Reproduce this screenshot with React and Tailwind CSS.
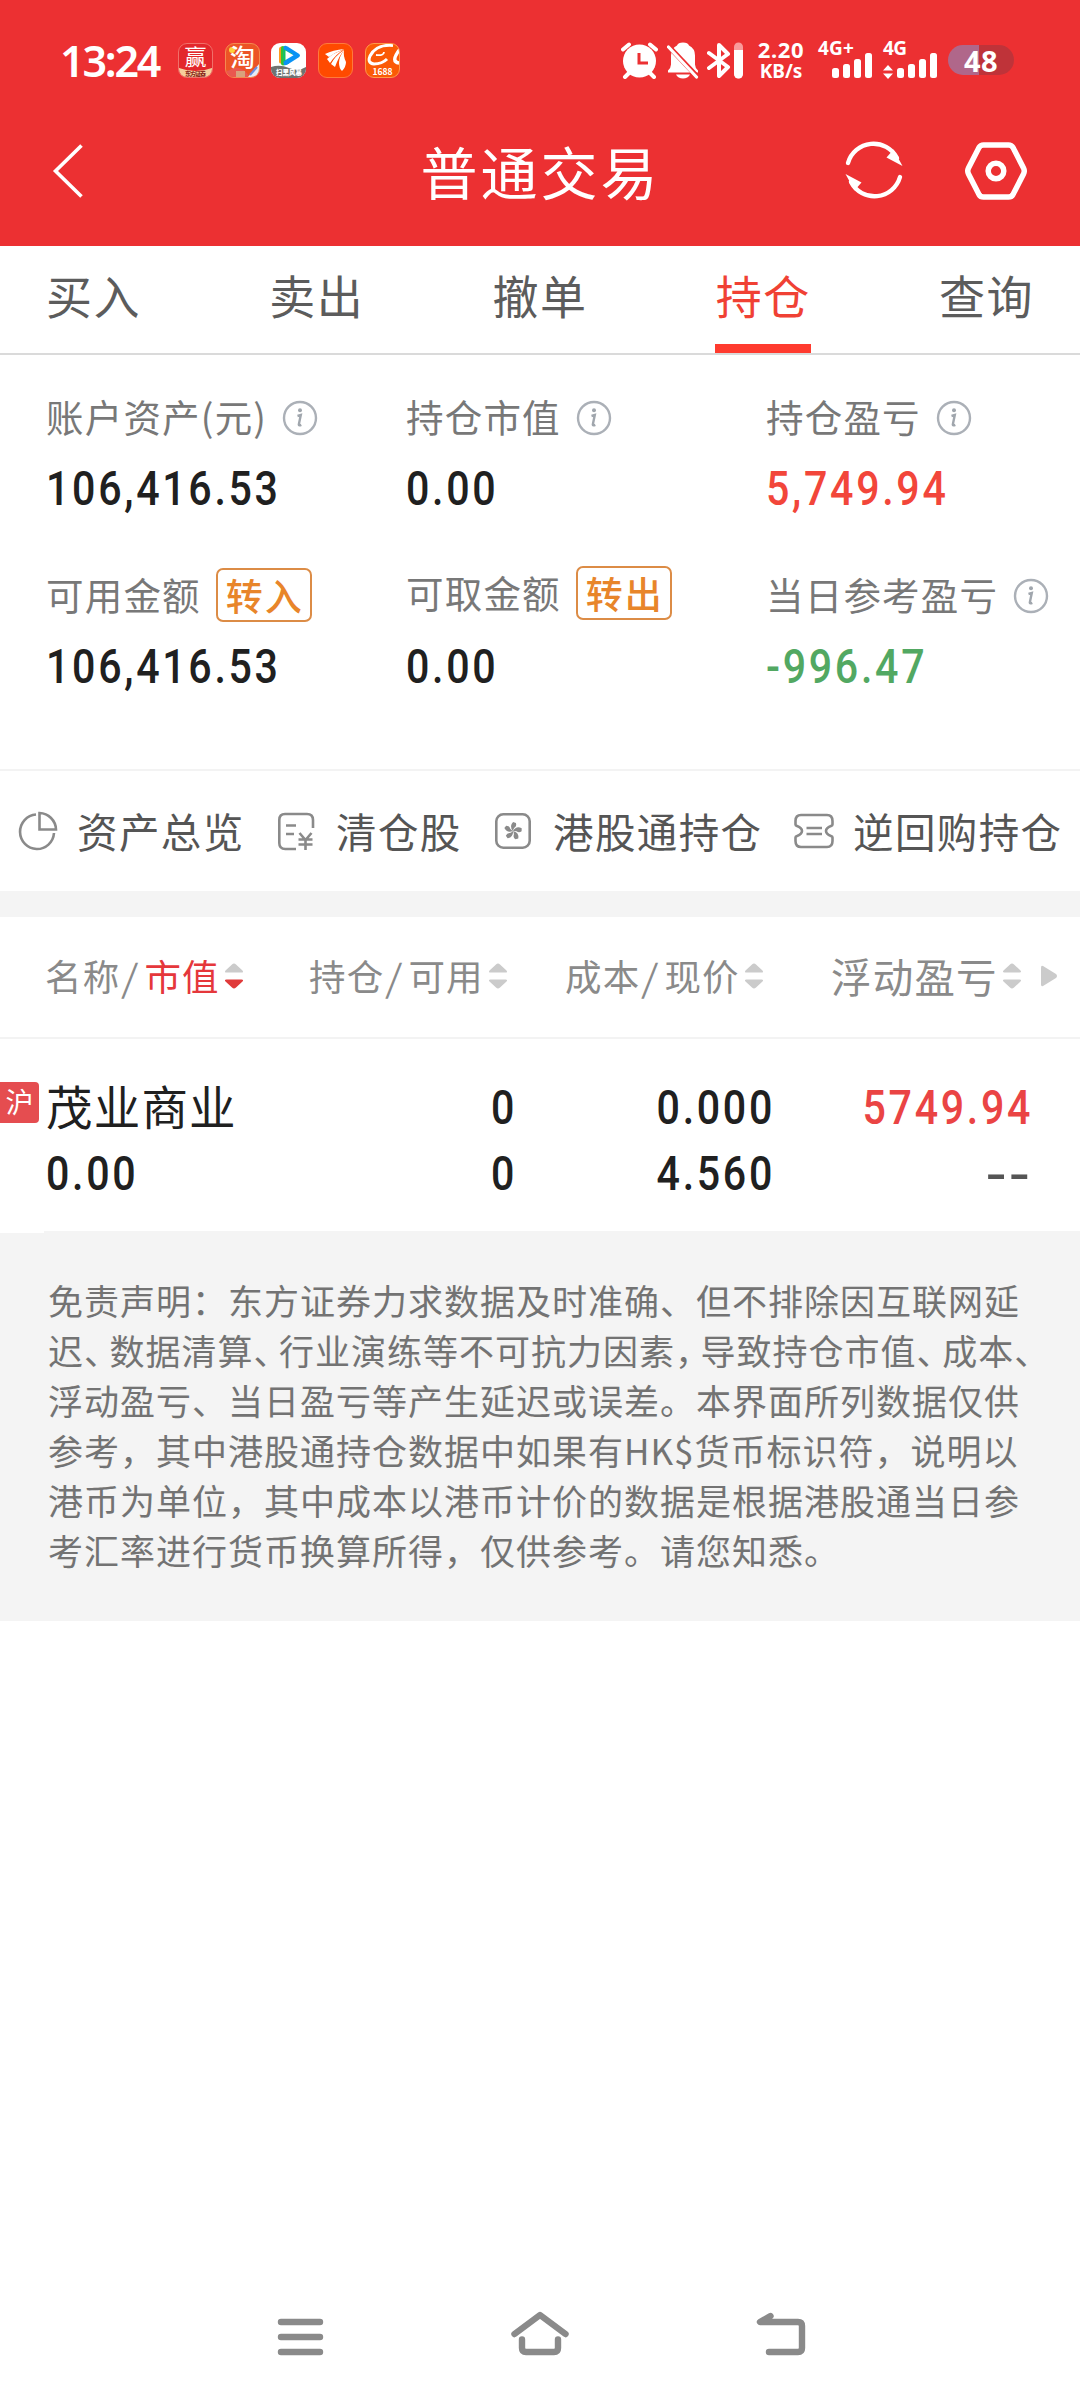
const CJK = "font-['Noto_Sans_CJK_SC',sans-serif]";

function AppBadge({ children, className }) {
  return (
    <div className={`h-[35px] w-[35px] overflow-hidden rounded-[9px] ${className}`}>
      {children}
    </div>
  );
}

function Signal({ className }) {
  return (
    <svg width="40" height="26" viewBox="0 0 40 26" fill="#fff" className={className}>
      <rect x="0" y="15" width="7" height="10" rx="2.5" />
      <rect x="11" y="11" width="7" height="14" rx="2.5" />
      <rect x="22" y="6" width="7" height="19" rx="2.5" />
      <rect x="33" y="0" width="7" height="25" rx="2.5" />
    </svg>
  );
}

function StatusBar() {
  return (
    <div className="flex h-[100px] items-center pt-5 pl-[60px]">
      <div className="w-[118px] font-['Noto_Sans',sans-serif] text-[43px] leading-none font-semibold tracking-[-2.2px]">
        13:24
      </div>
      <div className="flex w-[443px] gap-[11.7px]">
        <AppBadge className="border border-[#f0706a] bg-[#e3262b]">
          <svg width="33" height="33" viewBox="0 0 33 33">
            <path d="M0 24q8 3 16.500 3T33 24v9H0z" fill="#f6cf9c" />
            <text x="5.500" y="20.500" fontSize="22" fill="#fff">赢</text>
            <text x="6" y="32" fontSize="6" fontWeight="900" fill="#8a2a1c" textLength="21">东方证券</text>
          </svg>
        </AppBadge>
        <AppBadge className="flex items-center justify-center border border-[#f58a50] bg-[#ec5426]">
          <svg width="33" height="33" viewBox="0 0 33 33">
            <path d="M0 33V27c5 0 6-4 12-3s8 4 12 9z" fill="#e9584f" />
            <path d="M22 33L33 20v13z" fill="#e6eaf5" />
            <path d="M10 27h9v6h-9z" fill="#d9a27c" />
            <circle cx="6" cy="6" r="3" fill="#ffd23c" />
            <text x="4" y="22.500" fontSize="25" fontWeight="500" fill="#fff">淘</text>
            <path d="M24 31l7-8" stroke="#6a8fe0" strokeWidth="2" />
          </svg>
        </AppBadge>
        <AppBadge className="bg-white">
          <svg width="35" height="35" viewBox="0 0 35 35">
            <path d="M0 24q9-3 18 1t17-1v11H0z" fill="#6f7371" />
            <path d="M8 6q0-2.500 3-2.500l2 17q-5 1-5-2z" fill="#ff9a1f" />
            <path d="M10 5q0-3 4-1.500l4 17q-8 4-8 0z" fill="#32c432" />
            <path d="M12.500 4q1-2 4-.5l11 7q3 2 0 4l-11 7q-4 2-4-1z" fill="#0a93f5" />
            <path d="M12.500 6l9 5-9 8z" fill="#19c556" />
            <path d="M14.500 7.500v9.500l8-4.700z" fill="#fff" />
            <text x="5" y="31.500" fontSize="6.500" fontWeight="900" fill="#fff" textLength="26">扫黑风暴</text>
          </svg>
        </AppBadge>
        <AppBadge className="border border-[#ff7a3c] bg-[#ff4a00]">
          <svg width="33" height="33" viewBox="0 0 33 33" fill="#fff">
            <path d="M25 5Q14 6 6 10l4 3Q17 8 25 5z" />
            <path d="M25 5.500Q14 9 8 15l3 4Q17 10 25 5.500z" />
            <path d="M25 6Q16 12 12 20l4 3Q20 12 25 6z" />
            <path d="M25 6q-5 7-5 13 0 5 3 8 4-4 4-9-3-6-2-12z" />
          </svg>
        </AppBadge>
        <AppBadge className="border border-[#ff9a4a] bg-[#fb5a06]">
          <svg width="33" height="33" viewBox="0 0 33 33" fill="none" stroke="#fff">
            <path d="M27 1.500Q10 0 4 12q-3 7 4 8 8 0 13-5" strokeWidth="3" />
            <path d="M10 11q8 1 8-3" strokeWidth="1.800" />
            <path d="M34 5q-10 13-1 14" strokeWidth="3.400" />
            <text x="16.500" y="30.500" textAnchor="middle" fontSize="8.500" fontWeight="700" fill="#fff" stroke="none">1688</text>
          </svg>
        </AppBadge>
      </div>
      <svg width="37" height="37" viewBox="0 0 37 37" fill="none" stroke="#fff" strokeLinecap="round">
        <path d="M2 7.500l6-5M29 2.500l6 5M9 30l-5 5M28 30l5 5" strokeWidth="4" />
        <circle cx="18.500" cy="19" r="16.500" fill="#fff" stroke="none" />
        <path d="M18 11v10h9" stroke="#ec3032" strokeWidth="3" strokeLinecap="butt" />
      </svg>
      <svg width="32" height="37" viewBox="0 0 32 37" fill="#fff" className="ml-[9px]">
        <path d="M16 .5q5 0 6 3 6 3 6 10v9q0 3 3 6v2H1v-2q3-3 3-6v-9q0-7 6-10 1-3 6-3z" />
        <path d="M9 32.500h14q-2 4-7 4t-7-4z" />
        <path d="M-1 1.500L32 36.500" stroke="#ec3032" strokeWidth="5" />
        <path d="M1.500 5L29.500 35" stroke="#fff" strokeWidth="3.200" strokeLinecap="round" />
      </svg>
      <svg width="37" height="37" viewBox="0 0 37 37" fill="none" className="ml-[8px]">
        <path d="M2 11l19 14-9 9V3l9 9L2 26" stroke="#fff" strokeWidth="4" strokeLinejoin="round" strokeLinecap="round" />
        <rect x="27" y=".5" width="9" height="36" rx="4.500" fill="#f99a9b" />
        <path d="M27 8h9v24a4.500 4.500 0 0 1-9 0z" fill="#fff" />
      </svg>
      <div className="ml-[12px] flex w-[50px] flex-col items-center font-['Noto_Sans',sans-serif] text-[22px] leading-[21px] font-bold tracking-[0.6px]">
        <span>2.20</span>
        <span className="text-[19px] leading-[22px] tracking-normal">KB/s</span>
      </div>
      <div className="ml-[12px] flex h-[37px] w-[56px] flex-col">
        <span className="font-['Noto_Sans',sans-serif] text-[19px] leading-[13px] font-bold tracking-[0.2px]">4G+</span>
        <Signal className="-mt-[2px] ml-[14px] shrink-0" />
      </div>
      <div className="ml-[9px] flex h-[37px] w-[56px] flex-col">
        <span className="font-['Noto_Sans',sans-serif] text-[19px] leading-[13px] font-bold tracking-[-0.5px]">4G</span>
        <div className="-mt-[2px] flex gap-[4px]">
          <svg width="10" height="26" viewBox="0 0 10 26" fill="#fff" className="shrink-0">
            <path d="M5 12l5 5.500H0zM5 26l5-5.500H0z" />
          </svg>
          <Signal className="shrink-0" />
        </div>
      </div>
      <div className="ml-[9px] flex h-[30px] w-[66px] items-center justify-center rounded-full bg-[linear-gradient(90deg,#b0678a_0,#b0678a_47%,#bf3339_47%)] font-['Noto_Sans',sans-serif] text-[29px] leading-none font-bold tracking-[0.5px]">
        48
      </div>
    </div>
  );
}

function TitleBar() {
  return (
    <div className="flex h-[146px] items-center justify-between pr-[52px] pb-[4px] pl-[52px]">
      <div className="w-[184px]">
        <svg width="32" height="54" viewBox="0 0 32 54" fill="none" stroke="#fff" strokeWidth="3.600">
          <path d="M29.500 1.500L3.500 27l26 25.500" />
        </svg>
      </div>
      <h1 className="-mt-[2px] pl-px text-[57px] leading-[70px] tracking-[3px]">普通交易</h1>
      <div className="flex w-[184px] items-center justify-between">
        <svg width="60" height="60" viewBox="0 0 60 60" className="mb-[3px]">
          <g fill="none" stroke="#fff" strokeWidth="4.400" strokeLinecap="round">
            <path d="M4 23A26.500 26.500 0 0 1 53 18" />
            <path d="M56 37A26.500 26.500 0 0 1 7 42" />
          </g>
          <path d="M58.500 26L42.500 17.500l7-8zM1.500 34l16 8.500-7 8z" fill="#fff" />
        </svg>
        <svg width="64" height="60" viewBox="0 0 64 60" fill="none" stroke="#fff" strokeWidth="5.500">
          <path d="M19.500 4h25q3 0 4.500 2.500L59.500 27q1.500 3 0 6L49 53.500Q47.500 56 44.500 56h-25q-3 0-4.500-2.500L4.500 33q-1.500-3 0-6L15 6.500Q16.500 4 19.500 4z" />
          <circle cx="32" cy="30" r="7.800" />
        </svg>
      </div>
    </div>
  );
}

function Tabs() {
  const tabs = ['买入', '卖出', '撤单', '持仓', '查询'];
  return (
    <nav className="flex h-[109px] justify-between border-b-2 border-[#dadada] px-[46px] text-[46px] tracking-[1.5px] text-[#5c5c5c]">
      {tabs.map((t) => (
        <div
          key={t}
          className={`flex w-[95px] flex-col items-center justify-between pt-[18px] whitespace-nowrap ${t === '持仓' ? 'text-[#f04134]' : ''}`}
        >
          <span className="leading-[60px]">{t}</span>
          {t === '持仓' && <i className="h-[9px] w-[96px] bg-[#ff3b2f]" />}
        </div>
      ))}
    </nav>
  );
}

function InfoIcon() {
  return (
    <svg width="36" height="36" viewBox="0 0 36 36" fill="none" className="mt-[3px] ml-[15px] shrink-0">
      <circle cx="18" cy="18" r="16" stroke="#abb0b7" strokeWidth="2.400" />
      <circle cx="18" cy="10.300" r="2" fill="#a0a6ad" />
      <path d="M15.500 16l3.300-1-2 9.500q0 1.500 2.500.300" stroke="#a0a6ad" strokeWidth="2.400" />
    </svg>
  );
}

function Pill({ children }) {
  return (
    <span className="mt-[2px] ml-[15px] flex h-[54px] w-[96px] shrink-0 items-center justify-center rounded-[7px] border-2 border-[#dc8c46] pl-[2px] text-[37px] leading-[50px] font-medium tracking-[2px] text-[#e8852a]">
      {children}
    </span>
  );
}

function Num({ children, className = '', spacing = 'tracking-[3.2px]' }) {
  return (
    <span className={`inline-block scale-x-84 font-['Roboto',sans-serif] text-[49px] leading-[60px] font-medium ${spacing} ${className}`}>
      {children}
    </span>
  );
}

function Stat({ label, value, pill, info, color = 'text-[#202020]', lift }) {
  return (
    <div className="flex w-[360px] shrink-0 flex-col items-start whitespace-nowrap">
      <div className={`flex h-[54px] items-center text-[37.5px] leading-[54px] tracking-[1.2px] text-[#787878] ${lift ? '-mt-[2px] mb-[2px]' : ''}`}>
        <span>{label}</span>
        {info && <InfoIcon />}
        {pill && <Pill>{pill}</Pill>}
      </div>
      <Num className={`mt-[16px] origin-left ${color}`}>{value}</Num>
    </div>
  );
}

function Summary() {
  return (
    <section className="flex h-[416px] flex-col gap-[48px] border-b-2 border-[#f3f3f3] pt-[34px] pl-[46px]">
      <div className="flex">
        <Stat label="账户资产(元)" value="106,416.53" info />
        <Stat label="持仓市值" value="0.00" info />
        <Stat label="持仓盈亏" value="5,749.94" info color="text-[#f2463a]" />
      </div>
      <div className="flex">
        <Stat label="可用金额" value="106,416.53" pill="转入" />
        <Stat label="可取金额" value="0.00" pill="转出" lift />
        <Stat label="当日参考盈亏" value="-996.47" info color="text-[#52a862]" />
      </div>
    </section>
  );
}

const PETAL_ANGLES = [0, 72, 144, 216, 288];

function Shortcuts() {
  return (
    <section className="flex h-[120px] items-center pl-[18px] text-[40.5px] leading-[60px] tracking-[1.4px] whitespace-nowrap text-[#555]">
      <div className="flex w-[259px] items-center">
        <svg width="40" height="40" viewBox="0 0 40 40" fill="none" stroke="#8a8a8a" strokeWidth="2.600" className="mr-[19px]">
          <path d="M18 3.500A17 17.300 0 1 0 36 22" />
          <path d="M21.500 2v16.500h16.500A17 17 0 0 0 21.500 2z" />
        </svg>
        资产总览
      </div>
      <div className="flex w-[217px] items-center">
        <svg width="38" height="40" viewBox="0 0 38 40" fill="none" stroke="#8a8a8a" strokeWidth="2.600" className="mr-[21px]">
          <path d="M36 17V9q0-6-6-6H8Q2.300 3 2.300 9v23q0 6 6 6H19M9 14.500h10M9 23h8" />
          <path d="M22.500 22l6 7 6-7M28.500 29v10M21.500 28.500h14M21.500 33.500h14" />
        </svg>
        清仓股
      </div>
      <div className="flex w-[299px] items-center">
        <svg width="38" height="38" viewBox="0 0 38 38" className="mr-[21px]">
          <rect x="2.300" y="2.300" width="33.400" height="33.400" rx="7" fill="none" stroke="#8a8a8a" strokeWidth="2.600" />
          {PETAL_ANGLES.map((a) => (
            <path key={a} d="M19 19q-5-4-1.500-9l3 .5q1.500 3-.8 5-.7 1.500-.7 3.500z" fill="#8a8a8a" transform={`rotate(${a + 10} 19 19)`} />
          ))}
        </svg>
        港股通持仓
      </div>
      <div className="flex items-center">
        <svg width="42" height="38" viewBox="0 0 42 38" fill="none" stroke="#8a8a8a" strokeWidth="2.600" className="mr-[18px]">
          <path d="M8 3h26q5.500 0 5.500 6v3.500q0 1-1.500 1.500-5 2-5 5t5 5q1.500.5 1.500 1.500V29q0 6-5.500 6H8q-5.500 0-5.500-6v-3.500q0-1 1.500-1.500 5-2 5-5t-5-5q-1.500-.5-1.500-1.500V9Q2.500 3 8 3zM13.500 16H29M13.500 22H29" />
        </svg>
        逆回购持仓
      </div>
    </section>
  );
}

function Sorter({ active }) {
  return (
    <svg width="20" height="28" viewBox="0 0 20 28" className="ml-[4px] shrink-0">
      <path d="M8 2.500q2-2 4 0l6.500 6q1.500 2-1 2h-15q-2.500 0-1-2z" fill="#cbcbcb" />
      <path d="M8 25.500q2 2 4 0l6.500-6q1.500-2-1-2h-15q-2.500 0-1 2z" fill={active ? '#e03a3a' : '#cbcbcb'} />
    </svg>
  );
}

function Slash() {
  return (
    <span className="w-[24px] text-center font-['Noto_Sans_CJK_SC',sans-serif] text-[37px] leading-[56px] tracking-normal">
      <span className="inline-block -translate-x-[2px] skew-x-[-5deg]">/</span>
    </span>
  );
}

function TableHead() {
  return (
    <div className="flex h-[122px] items-center border-b-2 border-[#f3f3f3] pb-[3px] pl-[45px] text-[36.5px] leading-[60px] tracking-[1.2px] whitespace-nowrap text-[#8a8a8a]">
      <div className="flex w-[264px] items-center">
        <span>名称</span>
        <Slash />
        <span className="text-[#e5373b]">市值</span>
        <Sorter active />
      </div>
      <div className="flex w-[256px] items-center">
        <span>持仓</span>
        <Slash />
        <span>可用</span>
        <Sorter />
      </div>
      <div className="flex w-[266px] items-center">
        <span>成本</span>
        <Slash />
        <span>现价</span>
        <Sorter />
      </div>
      <div className="flex items-center">
        <span className="text-[40.5px]">浮动盈亏</span>
        <Sorter />
        <svg width="18" height="22" viewBox="0 0 18 22" className="ml-[18px]">
          <path d="M1 2.500Q1 0 3 1l13 8q2 2 0 4L3 21q-2 1-2-1.500z" fill="#cbcbcb" />
        </svg>
      </div>
    </div>
  );
}

function Position() {
  return (
    <div className="flex h-[192px] pt-[39px] text-[#202020]">
      <div className="flex w-[39px] flex-col pt-[4px]">
        <span className="flex h-[41px] w-[39px] items-center justify-center rounded-r-[4px] bg-[#e54d50] pb-[3px] text-[28px] leading-none text-white">沪</span>
      </div>
      <div className="flex w-[221px] flex-col items-start gap-[6px] pl-[7px]">
        <span className="-mt-[3px] mb-[3px] text-[46.5px] leading-[60px] tracking-[1.2px] whitespace-nowrap">茂业商业</span>
        <Num className="origin-left">0.00</Num>
      </div>
      <div className="flex w-[257px] flex-col items-end gap-[6px]">
        <Num className="origin-right">0</Num>
        <Num className="origin-right">0</Num>
      </div>
      <div className="flex w-[258px] flex-col items-end gap-[6px]">
        <Num className="origin-right">0.000</Num>
        <Num className="origin-right">4.560</Num>
      </div>
      <div className="flex w-[258px] flex-col items-end gap-[6px]">
        <Num className="origin-right text-[#ea4444]">5749.94</Num>
        <span className="mr-[1px] inline-block origin-right scale-x-125 pt-px font-['Roboto',sans-serif] text-[49px] leading-[60px] font-medium tracking-[2px] text-[#555]">--</span>
      </div>
    </div>
  );
}

function Tight({ children }) {
  return <span className="-mr-[10.5px]">{children}</span>;
}

function Disclaimer() {
  return (
    <section className="flex h-[390px] flex-col bg-[#f4f4f4]">
      <div className="h-[2px] w-[44px] bg-white" />
      <div className="pt-[42px] pl-[48px] text-[35px] leading-[50px] tracking-[1px] whitespace-nowrap text-[#737373] [text-spacing-trim:space-all]">
        <p>免责声明：东方证券力求数据及时准确、但不排除因互联网延</p>
        <p>迟<Tight>、</Tight>数据清算<Tight>、</Tight>行业演练等不可抗力因素<Tight>，</Tight>导致持仓市值<Tight>、</Tight>成本、</p>
        <p>浮动盈亏、当日盈亏等产生延迟或误差。本界面所列数据仅供</p>
        <p>参考，其中港股通持仓数据中如果有HK$货币标识符，说明以</p>
        <p>港币为单位，其中成本以港币计价的数据是根据港股通当日参</p>
        <p>考汇率进行货币换算所得，仅供参考。请您知悉。</p>
      </div>
    </section>
  );
}

function NavBar() {
  return (
    <footer className="mt-auto flex h-[92px] items-start justify-center gap-[186px] pl-[2px]">
      <svg width="48" height="48" viewBox="0 0 48 48" stroke="#8a8a8a" strokeWidth="6.400" strokeLinecap="round">
        <path d="M5 14h39M5 29h39M5 44h39" />
      </svg>
      <svg width="60" height="48" viewBox="0 0 60 48" fill="none" stroke="#8a8a8a" strokeWidth="6.400" strokeLinecap="round" strokeLinejoin="round">
        <path d="M4.500 26L30 7l25.500 19M12 31.500V40q0 4 4 4h28q4 0 4-4v-8.500" />
      </svg>
      <svg width="50" height="48" viewBox="0 0 50 48" fill="none" stroke="#8a8a8a" strokeWidth="6.400" strokeLinecap="round" strokeLinejoin="round">
        <path d="M14.500 8L4 14h38q4 0 4 4v22q0 4-4 4H13" />
      </svg>
    </footer>
  );
}

export default function App() {
  return (
    <main className={`flex h-[2400px] w-[1080px] flex-col overflow-hidden bg-white ${CJK}`}>
      <header className="h-[246px] shrink-0 bg-[#ec3032] text-white">
        <StatusBar />
        <TitleBar />
      </header>
      <Tabs />
      <Summary />
      <Shortcuts />
      <div className="h-[26px] bg-[#f4f4f4]" />
      <TableHead />
      <Position />
      <Disclaimer />
      <NavBar />
    </main>
  );
}
